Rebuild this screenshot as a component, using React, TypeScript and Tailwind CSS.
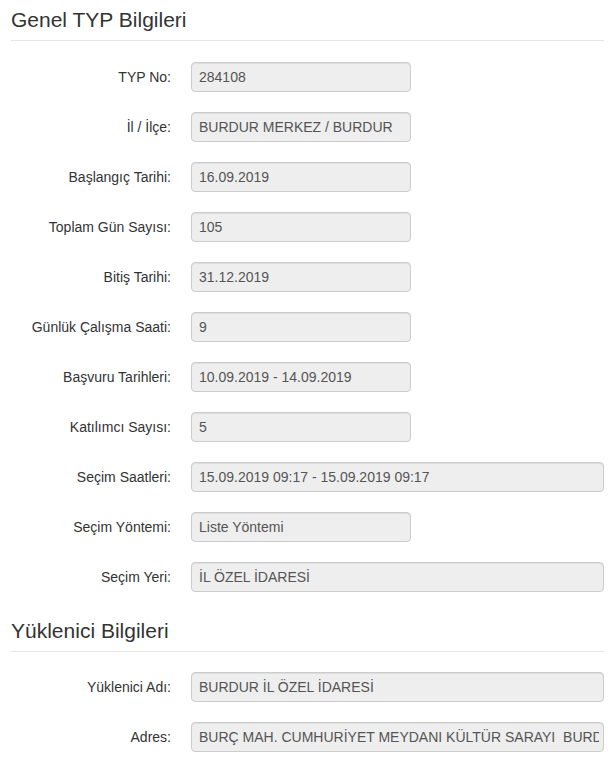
type Field = { label: string; value: string; wide?: boolean };

const genel: Field[] = [
  { label: "TYP No:", value: "284108" },
  { label: "İl / İlçe:", value: "BURDUR MERKEZ / BURDUR" },
  { label: "Başlangıç Tarihi:", value: "16.09.2019" },
  { label: "Toplam Gün Sayısı:", value: "105" },
  { label: "Bitiş Tarihi:", value: "31.12.2019" },
  { label: "Günlük Çalışma Saati:", value: "9" },
  { label: "Başvuru Tarihleri:", value: "10.09.2019 - 14.09.2019" },
  { label: "Katılımcı Sayısı:", value: "5" },
  { label: "Seçim Saatleri:", value: "15.09.2019 09:17 - 15.09.2019 09:17", wide: true },
  { label: "Seçim Yöntemi:", value: "Liste Yöntemi" },
  { label: "Seçim Yeri:", value: "İL ÖZEL İDARESİ", wide: true },
];

const yuklenici: Field[] = [
  { label: "Yüklenici Adı:", value: "BURDUR İL ÖZEL İDARESİ", wide: true },
  { label: "Adres:", value: "BURÇ MAH. CUMHURİYET MEYDANI KÜLTÜR SARAYI  BURDUR", wide: true },
];

function Legend({ children, className }: { children: React.ReactNode; className?: string }) {
  return (
    <div
      className={
        "pt-[5px] pb-[5px] text-[21px] leading-[30px] text-[#333] border-b border-[#e5e5e5] " +
        (className ?? "")
      }
    >
      {children}
    </div>
  );
}

function Row({ field }: { field: Field }) {
  return (
    <div className="grid grid-cols-[160px_1fr] gap-x-5 items-center">
      <label className="text-right text-sm text-[#333]">{field.label}</label>
      <div>
        <input
          readOnly
          value={field.value}
          className={
            "block h-[30px] rounded bg-[#eee] border border-[#ccc] pl-[7px] pr-[4px] text-sm text-[#555] outline-none shadow-[inset_0_1px_1px_rgba(0,0,0,0.075)] " +
            (field.wide ? "w-[413px]" : "w-[220px]")
          }
          style={{ fontFamily: '"Liberation Sans", Arial, sans-serif' }}
        />
      </div>
    </div>
  );
}

export default function App() {
  return (
    <div
      className="min-h-screen bg-white pl-[11px] w-[604px]"
      style={{ fontFamily: '"Liberation Sans", Arial, sans-serif' }}
    >
      {/* Genel TYP Bilgileri */}
      <Legend>Genel TYP Bilgileri</Legend>
      <div className="mt-[21px] flex flex-col gap-5">
        {genel.map((f) => (
          <Row key={f.label} field={f} />
        ))}
      </div>

      {/* Yüklenici Bilgileri */}
      <Legend className="mt-[19px]">Yüklenici Bilgileri</Legend>
      <div className="mt-5 flex flex-col gap-5">
        {yuklenici.map((f) => (
          <Row key={f.label} field={f} />
        ))}
      </div>
    </div>
  );
}
